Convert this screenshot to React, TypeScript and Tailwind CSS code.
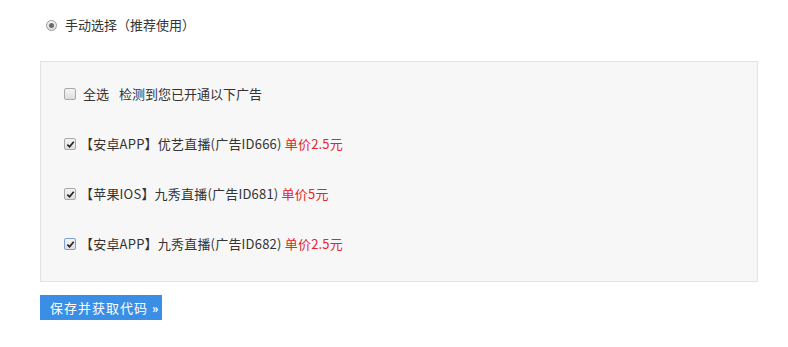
import React from "react";

const ads = [
  { id: 666, platform: "安卓APP", name: "优艺直播", price: "2.5", focus: false },
  { id: 681, platform: "苹果IOS", name: "九秀直播", price: "5", focus: false },
  { id: 682, platform: "安卓APP", name: "九秀直播", price: "2.5", focus: true },
];

function Box({ checked, focus }: { checked: boolean; focus?: boolean }) {
  return (
    <span
      className={`flex h-[12px] w-[12px] shrink-0 items-center justify-center rounded-[2px] border bg-gradient-to-b from-[#f4f4f4] to-[#dedede] ${
        focus ? "border-[#7b9fd6] from-[#e6eefa] to-[#c9d8ef]" : "border-[#a9a9a9]"
      }`}
    >
      {checked && (
        <svg viewBox="0 0 10 10" className="h-[9px] w-[9px]">
          <path d="M1.5 5.2 L4 7.6 L8.6 2" fill="none" stroke="#222" strokeWidth="1.9" />
        </svg>
      )}
    </span>
  );
}

export default function App() {
  return (
    <div
      className="h-[347px] w-[788px] bg-white px-[40px] pt-[17px] text-[13px] text-[#333]"
      style={{ fontFamily: '"Noto Sans CJK SC", "Noto Sans", sans-serif' }}
    >
      <div className="flex h-[16px] items-center">
        <span className="ml-[6px] flex h-[11px] w-[11px] items-center justify-center rounded-full border border-[#9a9a9a] bg-gradient-to-b from-[#f4f4f4] to-[#dcdcdc]">
          <span className="h-[5px] w-[5px] rounded-full bg-[#6b6b6b]" />
        </span>
        <span className="ml-[8px]">手动选择（推荐使用）</span>
      </div>

      <div className="mt-[28px] flex w-[718px] flex-col gap-[30px] border border-[#e3e3e3] bg-[#f7f7f7] pb-[27px] pl-[23px] pt-[22px]">
        <label className="flex h-[20px] items-center">
          <Box checked={false} />
          <span className="ml-[7px]">全选</span>
          <span className="ml-[10px]">检测到您已开通以下广告</span>
        </label>
        {ads.map((ad) => (
          <label key={ad.id} className="flex h-[20px] items-center">
            <Box checked focus={ad.focus} />
            <span className="ml-[4px] tracking-[0.2px]">
              【{ad.platform}】{ad.name}(广告ID{ad.id}){" "}
              <span className="text-[#e3262b]">单价{ad.price}元</span>
            </span>
          </label>
        ))}
      </div>

      <button className="mt-[13px] flex h-[25px] w-[122px] items-center bg-[#3a8ee6] pl-[10px] tracking-[1px] text-white">
        保存并获取代码<span className="ml-[4px] text-[12px] font-bold">»</span>
      </button>
    </div>
  );
}
